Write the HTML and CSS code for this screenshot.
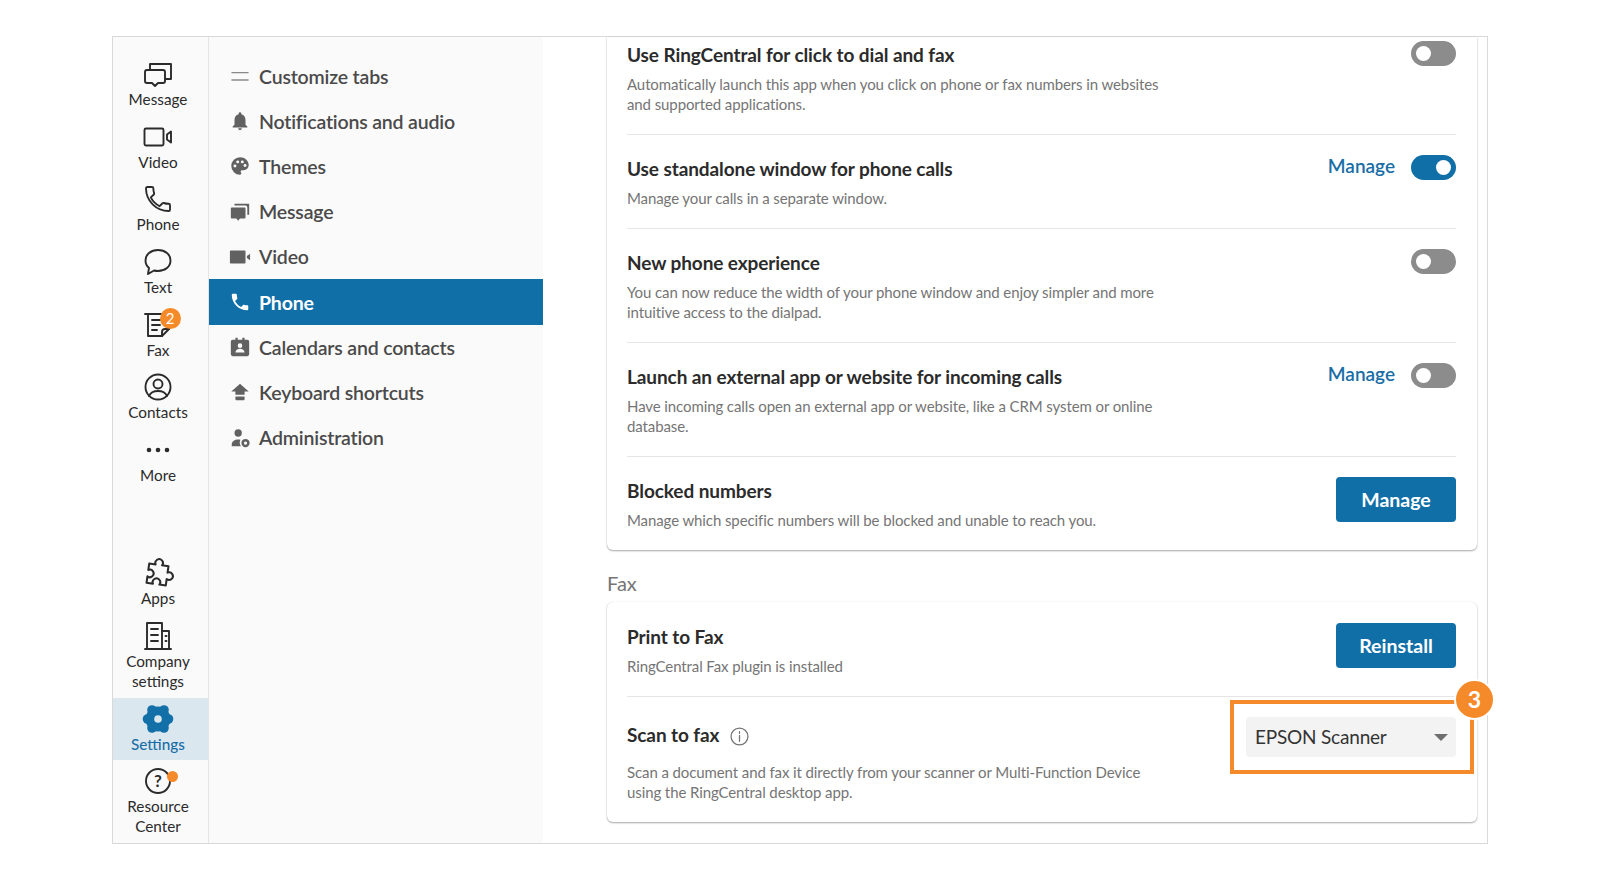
FILE: index.html
```html
<!DOCTYPE html>
<html lang="en">
<head>
<meta charset="utf-8">
<title>Settings</title>
<link rel="stylesheet" href="styles.css">
</head>
<body>
<div class="window">
  <nav class="rail">
    <div class="rail-group">
      <a class="rail-item"><svg class="rail-icon" viewBox="0 0 32 32"><path d="M8 12V6h21v15h-5"/><path d="M5 12h16a2 2 0 0 1 2 2v9a2 2 0 0 1-2 2h-5l-3 3-3-3H5a2 2 0 0 1-2-2v-9a2 2 0 0 1 2-2z"/></svg><span>Message</span></a>
      <a class="rail-item"><svg class="rail-icon" viewBox="0 0 32 32"><rect x="2.500" y="7.500" width="19" height="17" rx="1.500"/><path d="M25 13.500l4-3v11l-4-3z"/></svg><span>Video</span></a>
      <a class="rail-item"><svg class="rail-icon" viewBox="0 0 24 24"><path class="thin" d="M6.600 10.800c1.400 2.800 3.800 5.100 6.600 6.600l2.200-2.200c.3-.3.700-.4 1-.2 1.100.4 2.300.6 3.600.6.600 0 1 .4 1 1V20c0 .6-.4 1-1 1C10.600 21 3 13.400 3 4c0-.6.400-1 1-1h3.500c.6 0 1 .4 1 1 0 1.300.2 2.500.6 3.600.1.300 0 .7-.2 1z"/></svg><span>Phone</span></a>
      <a class="rail-item"><svg class="rail-icon" viewBox="0 0 32 32"><path d="M16 4c7.200 0 12.500 4.300 12.500 10.500S23.200 25 16 25c-1.400 0-2.800-.2-4-.5L6 28l1-6c-2.200-1.900-3.500-4.500-3.500-7.500C3.500 8.300 8.800 4 16 4z"/></svg><span>Text</span></a>
      <a class="rail-item">
        <span class="icon-wrap"><svg class="rail-icon" viewBox="0 0 32 32"><path d="M3 5h17"/><path d="M6 5v22h14l7-7V14"/><path d="M10 11h8M10 16h8M10 21h5"/><path d="M20 27v-4a3 3 0 0 1 3-3h4"/></svg><b class="count">2</b></span>
        <span>Fax</span>
      </a>
      <a class="rail-item"><svg class="rail-icon" viewBox="0 0 32 32"><circle cx="16" cy="16" r="12.500"/><circle cx="16" cy="13" r="4.500"/><path d="M7 25c1.500-3.500 5-5 9-5s7.500 1.500 9 5"/></svg><span>Contacts</span></a>
      <a class="rail-item"><svg class="rail-icon solid" viewBox="0 0 32 32"><circle cx="7" cy="16" r="2.300"/><circle cx="16" cy="16" r="2.300"/><circle cx="25" cy="16" r="2.300"/></svg><span>More</span></a>
    </div>
    <div class="rail-group">
      <a class="rail-item"><svg class="rail-icon" viewBox="0 0 32 32"><path transform="translate(15.500 17.500) rotate(8) scale(1.080)" d="M-9-9H-3a3.500 3.500 0 1 1 6 0H9V-3a3.500 3.500 0 1 1 0 6V9H3a3.500 3.500 0 1 0-6 0H-9V3a3.500 3.500 0 1 0 0-6Z"/></svg><span>Apps</span></a>
      <a class="rail-item"><svg class="rail-icon" viewBox="0 0 32 32"><path d="M3 29h26"/><path d="M5 29V3h15v26"/><path d="M20 11h7v18"/><path d="M9 9h7M9 15h7M9 21h7M23.500 16h1M23.500 21h1"/></svg><span>Company<br>settings</span></a>
      <a class="rail-item active"><svg class="rail-icon solid blue" viewBox="0 0 32 32"><circle cx="10" cy="7" r="4.800"/><circle cx="22" cy="7" r="4.800"/><circle cx="10" cy="25" r="4.800"/><circle cx="22" cy="25" r="4.800"/><circle cx="5.500" cy="16" r="4.800"/><circle cx="26.500" cy="16" r="4.800"/><circle cx="16" cy="16" r="12.500"/><circle class="hole" cx="16" cy="16" r="3.800"/></svg><span>Settings</span></a>
      <a class="rail-item">
        <span class="icon-wrap"><svg class="rail-icon" viewBox="0 0 32 32"><circle cx="16" cy="16" r="12"/></svg><b class="qmark">?</b><i class="dot"></i></span>
        <span>Resource<br>Center</span>
      </a>
    </div>
  </nav>

  <aside class="menu">
    <a class="menu-item"><svg class="menu-icon" viewBox="0 0 18 18"><path d="M2 5.700h14v1.100H2zM2 11.700h14v1.100H2z" opacity=".75"/></svg><span>Customize tabs</span></a>
    <a class="menu-item"><svg class="menu-icon" viewBox="0 0 24 24"><path d="M12 22c1.100 0 2-.9 2-2h-4c0 1.100.9 2 2 2zm6-6v-5c0-3.100-1.600-5.600-4.500-6.300V4c0-.8-.7-1.500-1.500-1.500s-1.500.7-1.500 1.500v.7C7.600 5.400 6 7.900 6 11v5l-2 2v1h16v-1z"/></svg><span>Notifications and audio</span></a>
    <a class="menu-item"><svg class="menu-icon" viewBox="0 0 24 24"><path d="M12 2.500a9.500 9.500 0 0 0 0 19c.9 0 1.500-.7 1.500-1.500 0-.4-.2-.8-.4-1-.3-.3-.4-.6-.4-1 0-.8.7-1.500 1.500-1.500H16a5.500 5.500 0 0 0 5.500-5.500c0-4.700-4.300-8.500-9.500-8.500z"/><g class="holes"><circle cx="6.500" cy="12" r="1.600"/><circle cx="9.500" cy="7.500" r="1.600"/><circle cx="14.500" cy="7.500" r="1.600"/><circle cx="17.500" cy="11.500" r="1.600"/></g></svg><span>Themes</span></a>
    <a class="menu-item"><svg class="menu-icon" viewBox="0 0 24 24"><path d="M6 3h16v12h-2V7a2 2 0 0 0-2-2H6z"/><path d="M2 8a1 1 0 0 1 1-1h14a1 1 0 0 1 1 1v10a1 1 0 0 1-1 1h-5l-2 2.500L8 19H3a1 1 0 0 1-1-1z"/></svg><span>Message</span></a>
    <a class="menu-item"><svg class="menu-icon" viewBox="0 0 24 24"><rect x="1" y="5" width="17" height="14" rx="1"/><path d="M19.500 11L23 8.500v7L19.500 13z"/></svg><span>Video</span></a>
    <a class="menu-item selected"><svg class="menu-icon" viewBox="0 0 24 24"><path d="M6.600 10.800c1.400 2.800 3.800 5.100 6.600 6.600l2.200-2.200c.3-.3.700-.4 1-.2 1.100.4 2.300.6 3.600.6.600 0 1 .4 1 1V20c0 .6-.4 1-1 1C10.600 21 3 13.400 3 4c0-.6.400-1 1-1h3.500c.6 0 1 .4 1 1 0 1.300.2 2.500.6 3.600.1.300 0 .7-.2 1z"/></svg><span>Phone</span></a>
    <a class="menu-item"><svg class="menu-icon" viewBox="0 0 24 24"><path fill-rule="evenodd" d="M7 2h2.500v2h5V2H17v2h3a2 2 0 0 1 2 2v14a2 2 0 0 1-2 2H4a2 2 0 0 1-2-2V6a2 2 0 0 1 2-2h3zM12 8a2.500 2.500 0 1 0 0 5 2.500 2.500 0 0 0 0-5zM7 18h10c0-2.500-2.500-4-5-4s-5 1.500-5 4z"/></svg><span>Calendars and contacts</span></a>
    <a class="menu-item"><svg class="menu-icon" viewBox="0 0 24 24"><path d="M12 3L2.500 11.500h4.500V15h10v-3.500h4.500zM7 17h10v3a1 1 0 0 1-1 1H8a1 1 0 0 1-1-1z"/></svg><span>Keyboard shortcuts</span></a>
    <a class="menu-item"><svg class="menu-icon" viewBox="0 0 24 24"><circle cx="10" cy="6.500" r="4"/><path d="M3 21v-2c0-3.300 3-5.500 7-5.500.9 0 1.700.1 2.500.3-.5 1-.8 2-.8 3.200 0 1.500.5 2.900 1.300 4z"/><path fill-rule="evenodd" d="M18 13a4.500 4.500 0 1 0 0 9 4.500 4.500 0 0 0 0-9zm0 2.700a1.800 1.800 0 1 1 0 3.600 1.800 1.800 0 0 1 0-3.600z"/></svg><span>Administration</span></a>
  </aside>

  <main class="content">
    <section class="card cut">
      <div class="row first">
        <div class="row-text">
          <h3>Use RingCentral for click to dial and fax</h3>
          <p>Automatically launch this app when you click on phone or fax numbers in websites and supported applications.</p>
        </div>
        <div class="row-actions"><span class="toggle"></span></div>
      </div>
      <div class="row">
        <div class="row-text">
          <h3>Use standalone window for phone calls</h3>
          <p>Manage your calls in a separate window.</p>
        </div>
        <div class="row-actions"><a class="link">Manage</a><span class="toggle on"></span></div>
      </div>
      <div class="row">
        <div class="row-text">
          <h3>New phone experience</h3>
          <p>You can now reduce the width of your phone window and enjoy simpler and more intuitive access to the dialpad.</p>
        </div>
        <div class="row-actions"><span class="toggle"></span></div>
      </div>
      <div class="row">
        <div class="row-text">
          <h3>Launch an external app or website for incoming calls</h3>
          <p>Have incoming calls open an external app or website, like a CRM system or online database.</p>
        </div>
        <div class="row-actions"><a class="link">Manage</a><span class="toggle"></span></div>
      </div>
      <div class="row">
        <div class="row-text">
          <h3>Blocked numbers</h3>
          <p>Manage which specific numbers will be blocked and unable to reach you.</p>
        </div>
        <button class="btn">Manage</button>
      </div>
    </section>

    <h2 class="section-title">Fax</h2>

    <section class="card">
      <div class="row">
        <div class="row-text">
          <h3>Print to Fax</h3>
          <p>RingCentral Fax plugin is installed</p>
        </div>
        <button class="btn">Reinstall</button>
      </div>
      <div class="row scan">
        <div class="row-text">
          <h3>Scan to fax <svg class="info" viewBox="0 0 18 18"><circle cx="9" cy="9" r="8"/><path d="M9 8v5.500M9 4.500v1.500"/></svg></h3>
          <p>Scan a document and fax it directly from your scanner or Multi-Function Device using the RingCentral desktop app.</p>
        </div>
        <div class="select"><span class="select-value">EPSON Scanner</span><i class="caret"></i></div>
        <div class="ring"><b class="step">3</b></div>
      </div>
    </section>
  </main>
</div>
</body>
</html>
```

FILE: styles.css
```css
* { box-sizing: border-box; }
html, body { margin: 0; height: 100%; }
body {
  background: #fff;
  padding: 36px 112px;
  font-family: Lato, "Liberation Sans", sans-serif;
  color: #2b2b2b;
  overflow: hidden;
}
a { display: block; }
.window {
  display: flex;
  width: 1376px;
  height: 808px;
  border: 1px solid #d9d9d9;
}
.rail {
  width: 96px;
  flex: none;
  display: flex;
  flex-direction: column;
  justify-content: space-between;
  background: #fafafa;
  border-right: 1px solid #e4e4e4;
  padding-top: 16px;
}
.rail-item {
  display: flex;
  flex-direction: column;
  align-items: center;
  padding: 5px 5px 6.700px 0;
  font-size: 15.300px;
  line-height: 20px;
  text-align: center;
  color: #2b2b2b;
}
.rail-item.active { background: #dbe7ef; color: #1a6ea6; font-weight: 500; }
.rail-icon {
  display: block;
  width: 32px;
  height: 32px;
  margin-bottom: -1px;
  fill: none;
  stroke: #2b2b2b;
  stroke-width: 1.900;
  stroke-linejoin: round;
  stroke-linecap: round;
}
.rail-icon .thin { stroke-width: 1.400; }
.rail-icon.solid { fill: #2b2b2b; stroke: none; }
.rail-icon.blue { fill: #126fa8; }
.rail-icon.blue .hole { fill: #dbe7ef; }
.icon-wrap { position: relative; display: block; width: 32px; height: 31px; }
.count {
  position: absolute;
  left: 17.500px;
  top: -1px;
  width: 21px;
  height: 21px;
  border-radius: 50%;
  background: #f58a2a;
  color: #fff;
  font-size: 15px;
  font-weight: 400;
  line-height: 21px;
  text-align: center;
}
.qmark {
  position: absolute;
  left: 0;
  right: 0;
  top: 6px;
  font-size: 17px;
  line-height: 20px;
  font-weight: 700;
  text-align: center;
}
.dot {
  position: absolute;
  left: 24.500px;
  top: 5.500px;
  width: 11px;
  height: 11px;
  border-radius: 50%;
  background: #f58a2a;
}
.menu {
  width: 334px;
  flex: none;
  background: #fafafa;
  padding-top: 16.500px;
}
.menu-item {
  display: flex;
  align-items: center;
  gap: 8.500px;
  height: 45.200px;
  padding-left: 19.500px;
  font-size: 19.500px;
  letter-spacing: -0.18px;
  font-weight: 600;
  color: #4a4a4a;
}
.menu-item.selected { background: #116fa8; color: #fff; font-weight: 700; }
.menu-icon { width: 22px; height: 22px; flex: none; fill: #616161; }
.selected .menu-icon { fill: #fff; }
.menu-icon .holes { fill: #fafafa; }
.content {
  flex: 1;
  min-width: 0;
  padding: 0 10px 0 64px;
  background: #fff;
}
.card {
  background: #fff;
  padding: 0 21px 0 20px;
  border-radius: 6px;
  box-shadow: 0 1px 2px rgba(0,0,0,.35), 0 0 1px rgba(0,0,0,.1);
}
.card.cut { border-radius: 0 0 6px 6px; }
.row {
  display: flex;
  justify-content: space-between;
  align-items: flex-start;
  padding: 19px 0 20px;
  border-top: 1px solid #e6e6e6;
}
.row:first-child { border-top: 0; padding-top: 20px; }
.row.first { padding-top: 3px; }
.row-text { width: 545px; }
h3 {
  margin: 0 0 4px;
  font-size: 19px;
  letter-spacing: -0.09px;
  line-height: 30px;
  font-weight: 700;
  color: #2b2b2b;
}
p {
  margin: 0;
  font-size: 15px;
  letter-spacing: -0.1px;
  line-height: 20px;
  color: #757575;
}
.row-actions { display: flex; align-items: flex-start; gap: 16px; margin-top: 1px; }
.link { font-size: 19px; line-height: 22px; font-weight: 600; color: #1a6ea6; }
.toggle {
  position: relative;
  display: block;
  width: 45px;
  height: 25px;
  border-radius: 13px;
  background: #8c8c8c;
}
.toggle::after {
  content: "";
  position: absolute;
  left: 5px;
  top: 5px;
  width: 15px;
  height: 15px;
  border-radius: 50%;
  background: #fff;
}
.toggle.on { background: #116fa8; }
.toggle.on::after { left: 25px; }
.btn {
  width: 120px;
  height: 45px;
  margin-top: 1px;
  border: 0;
  border-radius: 4px;
  background: #116fa8;
  color: #fff;
  font: 700 19.500px Lato, "Liberation Sans", sans-serif;
}
.section-title {
  margin: 19px 0 5px;
  font-size: 20px;
  line-height: 28px;
  font-weight: 400;
  color: #757575;
}
.scan { position: relative; padding-top: 23px; padding-bottom: 20px; }
.scan h3 { margin-bottom: 12px; display: flex; align-items: center; gap: 11px; }
.info { width: 19px; height: 19px; margin-top: 2px; fill: none; stroke: #757575; stroke-width: 1.200; stroke-linecap: round; }
.select {
  display: flex;
  align-items: center;
  justify-content: space-between;
  width: 210px;
  height: 40px;
  margin-top: -3px;
  padding: 0 8px 0 9px;
  background: #f3f3f3;
  border-radius: 4px;
  font-size: 19px;
  letter-spacing: -0.2px;
  color: #333;
}
.select-value { margin-bottom: 2px; }
.caret {
  width: 0;
  height: 0;
  border-left: 7px solid transparent;
  border-right: 7px solid transparent;
  border-top: 7px solid #6e6e6e;
}
.ring {
  position: absolute;
  top: 3px;
  right: -18px;
  width: 244px;
  height: 74px;
  border: 4px solid #f58a2a;
}
.step {
  position: absolute;
  right: -25px;
  top: -25px;
  width: 41px;
  height: 41px;
  border-radius: 50%;
  background: #f58a2a;
  border: 2px solid #fff;
  color: #fff;
  font-size: 23px;
  font-weight: 700;
  line-height: 37px;
  text-align: center;
}
```
